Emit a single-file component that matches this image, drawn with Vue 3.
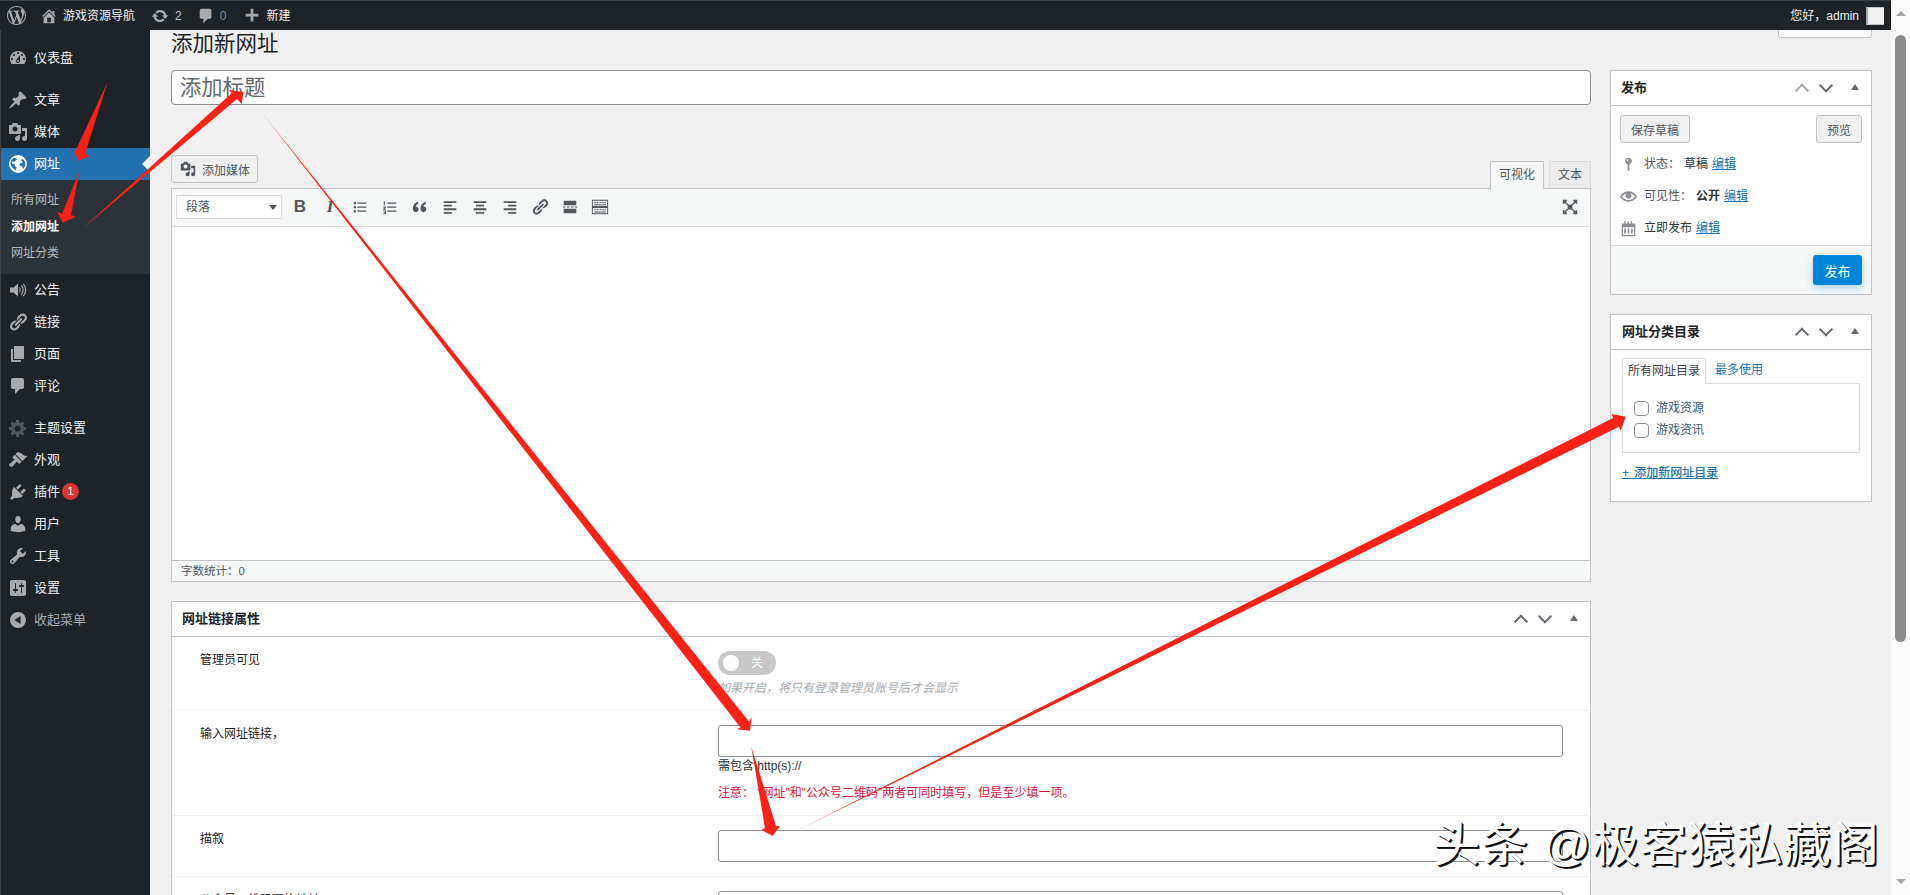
<template>
  <div class="page">
    <div class="frame">
      <header class="adminbar">
        <svg class="bar-logo" viewBox="0 0 20 20"><path :d="icons.wp" /></svg>
        <div class="bar-item site"><svg viewBox="0 0 20 20"><path :d="icons.home" /></svg><span>游戏资源导航</span></div>
        <div class="bar-item updates"><svg viewBox="0 0 20 20"><path :d="icons.update" /></svg><span>2</span></div>
        <div class="bar-item comments"><svg viewBox="0 0 20 20"><path :d="icons.comment" /></svg><span>0</span></div>
        <div class="bar-item newitem"><svg viewBox="0 0 20 20"><path :d="icons.plus" /></svg><span>新建</span></div>
        <div class="bar-right">您好，admin<span class="avatar"></span></div>
      </header>

      <div class="shell">
        <aside class="sidebar">
          <template v-for="item in menu" :key="item.label">
            <a class="menu-item" :class="{ current: item.current, sep: item.sep, dim: item.dim }">
              <svg class="menu-icon" :class="item.cls" viewBox="0 0 20 20"><path :d="icons[item.icon]" /></svg>
              <span>{{ item.label }}</span>
              <b v-if="item.badge" class="badge">{{ item.badge }}</b>
            </a>
            <div v-if="item.current" class="submenu">
              <a>所有网址</a>
              <a class="on">添加网址</a>
              <a>网址分类</a>
            </div>
          </template>
        </aside>

        <main class="main">
          <div class="head-row">
            <h1>添加新网址</h1>
            <div class="screen-tab"></div>
          </div>

          <div class="columns">
            <section class="left-col">
              <input class="title-input" placeholder="添加标题">

              <div class="editor-head">
                <button class="media-btn">
                  <svg viewBox="0 0 20 20"><path :d="icons.media" /></svg>添加媒体
                </button>
                <div class="editor-tabs">
                  <span class="tab active">可视化</span>
                  <span class="tab">文本</span>
                </div>
              </div>

              <div class="editor">
                <div class="toolbar">
                  <div class="format-select">段落<i></i></div>
                  <span class="tool tool-b">B</span>
                  <span class="tool tool-i">I</span>
                  <span v-for="tool in tools" :key="tool.name" class="tool">
                    <svg viewBox="0 0 20 20" v-html="tool.svg"></svg>
                  </span>
                  <span class="tool tool-full">
                    <svg viewBox="0 0 20 20"><path d="M1 1h5v2H4.500L8 7H12l3.500-4H14V1h5v5h-2V4.500L13 8v4l4 3.500V14h2v5h-5v-2h1.500L12 13H8l-3.500 4H6v2H1v-5h2v1.500L7 12V8L3 4.500V6H1z" /></svg>
                  </span>
                </div>
                <div class="editor-body"></div>
                <div class="editor-status">字数统计：0</div>
              </div>

              <div class="box link-box">
                <div class="box-head">
                  <h2>网址链接属性</h2>
                  <div class="handles"><i class="up"></i><i class="down"></i><i class="tri"></i></div>
                </div>

                <div class="row first">
                  <label>管理员可见</label>
                  <div class="field">
                    <div class="switch"><span class="knob"></span><span>关</span></div>
                    <p class="hint">如果开启，将只有登录管理员账号后才会显示</p>
                  </div>
                </div>
                <div class="row">
                  <label>输入网址链接，</label>
                  <div class="field">
                    <input class="text-input">
                    <p class="note">需包含 http(s)://</p>
                    <p class="warn">注意： "网址"和"公众号二维码"两者可同时填写，但是至少填一项。</p>
                  </div>
                </div>
                <div class="row">
                  <label>描叙</label>
                  <div class="field"><input class="text-input"></div>
                </div>
                <div class="row">
                  <label>公众号二维码图片地址</label>
                  <div class="field"><input class="text-input"></div>
                </div>
              </div>
            </section>

            <section class="right-col">
              <div class="box publish">
                <div class="box-head">
                  <h2>发布</h2>
                  <div class="handles"><i class="up faint"></i><i class="down"></i><i class="tri"></i></div>
                </div>
                <div class="actions">
                  <button class="plain-btn">保存草稿</button>
                  <button class="plain-btn">预览</button>
                </div>
                <div class="pub-row">
                  <svg viewBox="0 0 20 20"><path :d="icons.pin" /></svg>
                  <span class="key">状态：</span><span class="val">草稿</span><a>编辑</a>
                </div>
                <div class="pub-row">
                  <svg viewBox="0 0 20 20"><path :d="icons.eye" /></svg>
                  <span class="key">可见性：</span><strong>公开</strong><a>编辑</a>
                </div>
                <div class="pub-row">
                  <svg viewBox="0 0 20 20"><path :d="icons.calendar" /></svg>
                  <span class="val">立即发布</span><a>编辑</a>
                </div>
                <div class="pub-foot"><button class="primary">发布</button></div>
              </div>

              <div class="box category">
                <div class="box-head">
                  <h2>网址分类目录</h2>
                  <div class="handles"><i class="up"></i><i class="down"></i><i class="tri"></i></div>
                </div>
                <div class="cat-body">
                  <div class="cat-tabs">
                    <span class="cat-tab on">所有网址目录</span>
                    <span class="cat-tab">最多使用</span>
                  </div>
                  <div class="cat-panel">
                    <div v-for="cat in cats" :key="cat" class="cat-line"><span class="check"></span>{{ cat }}</div>
                  </div>
                  <a class="add-cat">+ 添加新网址目录</a>
                </div>
              </div>
            </section>
          </div>
        </main>
      </div>
    </div>

    <div class="scrollbar">
      <i class="arrow-up"></i>
      <span class="thumb"></span>
      <i class="arrow-down"></i>
    </div>

    <!-- red arrows drawn over the screenshot -->
    <svg class="overlay" viewBox="0 0 1910 895" width="1910" height="895">
      <defs>
        <linearGradient id="fadeA" gradientUnits="userSpaceOnUse" x1="257" y1="106" x2="300" y2="161">
          <stop offset="0" stop-color="#fa2117" stop-opacity="0.25" />
          <stop offset="1" stop-color="#fa2117" />
        </linearGradient>
        <linearGradient id="fadeB" gradientUnits="userSpaceOnUse" x1="788" y1="835" x2="860" y2="795">
          <stop offset="0" stop-color="#fa2117" stop-opacity="0.15" />
          <stop offset="1" stop-color="#fa2117" />
        </linearGradient>
      </defs>
      <polygon fill="#fa2117" points="107.700,81.700 85,154 90,155.700 78.300,160.700 72.300,148 75,151.700" />
      <polygon fill="#fa2117" points="79.300,171.700 71,215 76,216.700 62.700,222.700 57.300,211.700 62,214" />
      <polygon fill="#fa2117" points="81.700,229.300 232,93 228,90 243.500,92 241.700,104 237,99" />
      <polygon fill="url(#fadeA)" points="256.700,106 740.500,727.500 736.700,729.300 750,730.700 751.700,717.300 749,721.500" />
      <polygon fill="#fa2117" points="751.300,746.700 765,828 761.700,830 772.700,836 780,826 776,826" />
      <polygon fill="url(#fadeB)" points="788,835 1613,418 1611.700,414 1625.700,416.700 1620.700,430.700 1619,426.700" />
    </svg>

    <div class="watermark">头条 @极客猿私藏阁</div>
  </div>
</template>

<script setup>
const icons = {
  wp: 'M20 10c0-5.51-4.49-10-10-10C4.48 0 0 4.49 0 10c0 5.52 4.48 10 10 10 5.51 0 10-4.48 10-10zM7.780 15.370L4.370 6.220c.55-.02 1.170-.08 1.170-.08.5-.06.44-1.130-.06-1.110 0 0-1.450.11-2.370.11-.18 0-.37 0-.58-.01C4.120 2.690 6.870 1.110 10 1.110c2.330 0 4.450.87 6.050 2.340-.68-.11-1.650.39-1.650 1.580 0 .74.45 1.360.9 2.100.35.61.55 1.360.55 2.460 0 1.490-1.400 5-1.400 5l-3.030-8.370c.54-.02.82-.17.82-.17.5-.05.44-1.250-.06-1.220 0 0-1.440.12-2.380.12-.87 0-2.330-.12-2.330-.12-.5-.03-.56 1.200-.06 1.220l.92.08 1.260 3.410zM17.410 10c.24-.64.74-1.870.43-4.250.7 1.290 1.050 2.710 1.050 4.250 0 3.290-1.730 6.240-4.400 7.780.97-2.590 1.940-5.200 2.920-7.780zM6.100 18.090C3.120 16.650 1.110 13.530 1.110 10c0-1.300.23-2.480.72-3.590C3.250 10.300 4.670 14.200 6.100 18.090zm4.030-6.630l2.580 6.980c-.86.29-1.760.45-2.710.45-.79 0-1.570-.11-2.290-.33.81-2.380 1.620-4.740 2.420-7.100z',
  home: 'M16 8.500l1.530 1.530-1.060 1.060L10 4.620l-6.470 6.470-1.060-1.060L10 2.500l4 4v-2h2v4zm-6-2.460l6 5.990V18H4v-5.970zM12 17v-5H8v5h4z',
  update: 'M10.200 3.280c3.530 0 6.430 2.610 6.920 6h2.080l-3.500 4-3.500-4h2.320c-.45-1.970-2.210-3.450-4.320-3.450-1.450 0-2.730.71-3.540 1.780L4.950 5.660C6.230 4.200 8.110 3.280 10.200 3.280zm-.4 13.440c-3.520 0-6.430-2.610-6.920-6H.8l3.500-4c1.170 1.330 2.330 2.670 3.500 4H5.480c.45 1.970 2.210 3.450 4.320 3.450 1.450 0 2.730-.71 3.540-1.780l1.710 1.950c-1.280 1.460-3.150 2.380-5.250 2.380z',
  comment: 'M5 2h9c1.100 0 2 .9 2 2v7c0 1.100-.9 2-2 2h-2l-5 5v-5H5c-1.100 0-2-.9-2-2V4c0-1.100.9-2 2-2z',
  plus: 'M17 7.500v3h-5.500V16h-3v-5.500H3v-3h5.500V2h3v5.500z',
  dashboard: 'M3.760 16h12.480c1.100-1.370 1.760-3.110 1.760-5 0-4.420-3.580-8-8-8s-8 3.580-8 8c0 1.890.66 3.630 1.760 5zM10 4c.55 0 1 .45 1 1s-.45 1-1 1-1-.45-1-1 .45-1 1-1zM6 6c.55 0 1 .45 1 1s-.45 1-1 1-1-.45-1-1 .45-1 1-1zm8 0c.55 0 1 .45 1 1s-.45 1-1 1-1-.45-1-1 .45-1 1-1zm-5.370 5.550L12 7v6c0 1.100-.9 2-2 2s-2-.9-2-2c0-.57.24-1.080.63-1.450zM4 10c.55 0 1 .45 1 1s-.45 1-1 1-1-.45-1-1 .45-1 1-1zm12 0c.55 0 1 .45 1 1s-.45 1-1 1-1-.45-1-1 .45-1 1-1zm-5 3c0-.55-.45-1-1-1s-1 .45-1 1 .45 1 1 1 1-.45 1-1z',
  post: 'M10.440 3.020l1.820-1.820 6.360 6.350-1.830 1.820c-1.050-.68-2.480-.57-3.410.36l-.75.75c-.92.93-1.040 2.350-.35 3.410l-1.830 1.820-2.410-2.410-2.800 2.790c-.42.42-3.380 2.710-3.800 2.290s1.860-3.390 2.280-3.810l2.790-2.790L4.100 9.360l1.830-1.820c1.050.69 2.480.57 3.400-.36l.75-.75c.93-.92 1.050-2.350.36-3.410z',
  media: 'M13 11V4c0-.55-.45-1-1-1h-1.670L9 1H5L3.670 3H2c-.55 0-1 .45-1 1v7c0 .55.45 1 1 1h10c.55 0 1-.45 1-1zM7 4.500c1.380 0 2.500 1.120 2.500 2.500S8.380 9.500 7 9.500 4.500 8.380 4.500 7 5.620 4.500 7 4.500zM14 6h5v10.500c0 1.380-1.120 2.500-2.500 2.500S14 17.880 14 16.500s1.120-2.500 2.500-2.500c.17 0 .34.02.5.05V9h-3V6zm-4 8.050V13h2v3.500c0 1.380-1.120 2.500-2.500 2.500S7 17.880 7 16.500 8.120 14 9.500 14c.17 0 .34.02.5.05z',
  globe: 'M10 1a9 9 0 1 0 0 18 9 9 0 0 0 0-18zM5.200 4.300c1.300-.5 2.800-.2 3.400.6.500.7-.2 1.300-.9 1.500-.8.3-.6 1.100-1.300 1.400-.8.300-1.100-.5-1.900-.2-.7.300-.8 1-.4 1.600.500.7 1.600.4 2.300.9.800.6.400 1.500 1 2.200.5.6 1.200.9 1.100 1.800-.1.800-.7 1.300-.7 2.100C5.200 15 3 12.700 2.500 9.800c-.3-2.200 1-4.300 2.700-5.500zm8.300 1.200c.9-.3 1.900-.1 2.500.7 1.100 1.500 1.600 3.500 1.100 5.400-.3 1.200-1 2.400-2 3.300-.5-.7-.3-1.600-.9-2.300-.6-.7-1.700-.5-2.300-1.200-.5-.7-.1-1.700.6-2.100.7-.4 1.600-.1 2-.9.300-.7-.6-1.100-1.100-1.500-.3-.4-.3-1.200.1-1.400z',
  speaker: 'M2 7.500h3.500L10 3.500v13l-4.500-4H2zM11.500 7c1.600.9 1.600 5.100 0 6l-.5-1c.8-.7.8-3.300 0-4zM13.500 5c2.900 1.700 2.900 8.300 0 10l-.6-1c2.100-1.600 2.100-6.400 0-8zM15.500 3.500c3.600 2.500 3.600 10.500 0 13l-.6-1c2.800-2.300 2.800-8.700 0-11z',
  links: 'M17.740 2.760c1.680 1.690 1.680 4.410 0 6.100l-1.530 1.520c-1.120 1.120-2.700 1.470-4.140 1.090l2.620-2.610.76-.77.76-.76c.84-.84.84-2.200 0-3.040-.84-.85-2.200-.85-3.040 0l-.77.76-3.380 3.380c-.37-1.440-.02-3.020 1.100-4.140l1.520-1.530c1.690-1.680 4.420-1.680 6.100 0zM8.590 13.430l5.340-5.340c.42-.42.42-1.100 0-1.520-.44-.43-1.130-.39-1.530 0l-5.330 5.340c-.42.42-.42 1.100 0 1.520.44.43 1.130.39 1.520 0zm-.76 2.290l4.140-4.150c.38 1.440.03 3.020-1.090 4.140l-1.520 1.530c-1.690 1.680-4.410 1.680-6.100 0-1.680-1.680-1.680-4.420 0-6.100l1.530-1.520c1.120-1.120 2.700-1.470 4.140-1.100l-4.140 4.150c-.85.84-.85 2.200 0 3.050.84.84 2.200.84 3.040 0z',
  page: 'M6 15V2h10v13H6zm-1 1h8v2H3V5h2v11z',
  gear: 'M18 12h-2.180c-.17.7-.44 1.350-.81 1.930l1.540 1.540-2.100 2.100-1.540-1.540c-.58.36-1.230.63-1.910.79V19H8v-2.180c-.68-.16-1.330-.43-1.910-.79l-1.540 1.540-2.120-2.120 1.540-1.540c-.36-.58-.63-1.230-.79-1.910H1V9.030h2.170c.16-.7.44-1.350.8-1.940L2.430 5.550l2.100-2.100 1.540 1.540c.58-.37 1.240-.64 1.930-.81V2h3v2.180c.68.16 1.330.43 1.910.79l1.540-1.540 2.120 2.120-1.540 1.540c.36.59.64 1.240.8 1.940H18V12zm-8.500 1.500c1.660 0 3-1.340 3-3s-1.340-3-3-3-3 1.340-3 3 1.340 3 3 3z',
  appearance: 'M14.480 11.060L7.410 3.990l1.500-1.500c.5-.56 2.300-.47 3.510.32 1.210.8 1.430 1.280 2.910 2.100 1.180.64 2.450 1.260 4.450.85zm-.71.71L6.700 4.700 4.930 6.470c-.39.39-.39 1.020 0 1.410l1.060 1.060c.39.39.39 1.030 0 1.420-.6.6-1.430 1.110-2.210 1.690-.35.26-.7.53-1.010.84C1.430 13.230.4 14.750 1.800 16.150c1.410 1.410 2.920.38 3.760-.77.31-.31.58-.66.84-1.010.58-.78 1.090-1.610 1.690-2.210.39-.39 1.020-.39 1.410 0l1.060 1.060c.39.39 1.020.39 1.410 0z',
  plugin: 'M13.110 4.360L9.870 7.600 8 5.730l3.240-3.240c.35-.34 1.050-.2 1.560.32.52.51.66 1.210.31 1.550zm-8 1.770l.91-1.120 9.010 9.010-1.190.84c-.71.71-2.630 1.160-3.820 1.160H6.140L4.900 17.260c-.59.59-1.540.59-2.120 0-.59-.58-.59-1.530 0-2.120l1.240-1.240v-3.880c0-1.130.4-3.190 1.090-3.890zm7.260 3.970l3.240-3.240c.34-.35 1.040-.21 1.550.31.52.51.66 1.210.31 1.550l-3.240 3.250z',
  users: 'M10 9.250c-2.270 0-2.730-3.440-2.730-3.440C7 4.020 7.820 2 9.970 2c2.160 0 2.980 2.020 2.710 3.810 0 0-.41 3.440-2.680 3.440zm0 2.570L12.720 10c2.390 0 4.520 2.330 4.520 4.530v2.490s-3.650 1.130-7.240 1.130c-3.650 0-7.240-1.130-7.240-1.130v-2.490c0-2.250 1.940-4.480 4.470-4.480z',
  tools: 'M16.680 9.770c-1.340 1.340-3.300 1.670-4.950.99l-5.410 6.520c-.99.99-2.590.99-3.580 0s-.99-2.590 0-3.570l6.520-5.420c-.68-1.650-.35-3.610.99-4.950 1.280-1.280 3.120-1.620 4.720-1.060l-2.890 2.890 2.820 2.820 2.860-2.870c.53 1.580.18 3.390-1.080 4.650zM3.810 16.210c.4.39 1.040.39 1.430 0 .4-.4.4-1.040 0-1.430-.39-.4-1.030-.4-1.430 0-.39.39-.39 1.030 0 1.430z',
  settings: 'M18 16V4c0-1.100-.9-2-2-2H4c-1.100 0-2 .9-2 2v12c0 1.100.9 2 2 2h12c1.100 0 2-.9 2-2zM8 11h1c.55 0 1 .45 1 1s-.45 1-1 1H8v1.500c0 .28-.22.5-.5.5s-.5-.22-.5-.5V13H6c-.55 0-1-.45-1-1s.45-1 1-1h1V5.500c0-.28.22-.5.5-.5s.5.22.5.5V11zm5-2h-1c-.55 0-1-.45-1-1s.45-1 1-1h1V5.500c0-.28.22-.5.5-.5s.5.22.5.5V7h1c.55 0 1 .45 1 1s-.45 1-1 1h-1v5.500c0 .28-.22.5-.5.5s-.5-.22-.5-.5V9z',
  collapse: 'M10 2a8 8 0 1 0 0 16 8 8 0 0 0 0-16zm2.500 4v8l-6-4z',
  pin: 'M14 6c0 1.860-1.280 3.410-3 3.860V16c0 1-2 2-2 2V9.860c-1.720-.45-3-2-3-3.860 0-2.210 1.790-4 4-4s4 1.790 4 4zM8 5c0 .55.45 1 1 1s1-.45 1-1-.45-1-1-1-1 .45-1 1z',
  eye: 'M19.700 9.400C17.700 6 14 3.900 10 3.900S2.300 6 .3 9.400L0 10l.3.6c2 3.400 5.700 5.500 9.700 5.500s7.700-2.100 9.700-5.500l.3-.6-.3-.6zM10 14.100c-3.100 0-6-1.600-7.700-4.100C3.600 8 5.700 6.600 8 6.100c-.9.6-1.500 1.700-1.500 2.900 0 1.900 1.600 3.500 3.500 3.500s3.500-1.600 3.500-3.500c0-1.200-.6-2.300-1.500-2.900 2.300.5 4.400 1.900 5.700 3.900-1.700 2.500-4.600 4.100-7.700 4.100z',
  calendar: 'M2 4h3V1.500h1.500V4h2.300V1.500h1.500V4h2.300V1.500h1.500V4H18v15H2zm1.500 4.500V17.500h13V8.500zM5 10h2v6H5zm4 0h2v6H9zm4 0h2v6h-2z',
}

const menu = [
  { label: '仪表盘', icon: 'dashboard' },
  { label: '文章', icon: 'post', sep: true },
  { label: '媒体', icon: 'media' },
  { label: '网址', icon: 'globe', current: true },
  { label: '公告', icon: 'speaker' },
  { label: '链接', icon: 'links' },
  { label: '页面', icon: 'page' },
  { label: '评论', icon: 'comment' },
  { label: '主题设置', icon: 'gear', sep: true, cls: 'dark' },
  { label: '外观', icon: 'appearance' },
  { label: '插件', icon: 'plugin', badge: '1' },
  { label: '用户', icon: 'users' },
  { label: '工具', icon: 'tools' },
  { label: '设置', icon: 'settings' },
  { label: '收起菜单', icon: 'collapse', dim: true },
]

const tools = [
  { name: 'ul', svg: '<path d="M3 4.500h2.500V7H3zM3 9h2.500v2.500H3zM3 13.500h2.500V16H3zM7 5h10v1.400H7zM7 9.500h10v1.400H7zM7 14h10v1.400H7z"/>' },
  { name: 'ol', svg: '<path d="M7 5h10v1.400H7zM7 9.500h10v1.400H7zM7 14h10v1.400H7zM3 3.500h1.300V8H3zM2.500 9.500h3v1L3.800 12h1.700v1H2.500v-1l1.700-1.500H2.500zM2.500 14h3v4h-3v-1h2v-.5h-1v-1h1V15h-2z"/>' },
  { name: 'quote', svg: '<path d="M2 11.500c0-3.300 2.200-6 6-7.500v2.500C6.500 7.200 5.400 8.300 5.300 9.500c1.900 0 3.200 1.300 3.200 3.100S7 15.800 5.200 15.800C3.200 15.800 2 14 2 11.500zM10.500 11.500c0-3.300 2.200-6 6-7.500v2.500c-1.500.7-2.600 1.800-2.700 3 1.900 0 3.200 1.300 3.200 3.100s-1.500 3.200-3.300 3.200c-2 0-3.200-1.800-3.200-4.300z"/>' },
  { name: 'left', svg: '<path d="M3 3.500h14v2H3zM3 7.500h9v2H3zM3 11.500h14v2H3zM3 15.500h9v2H3z"/>' },
  { name: 'center', svg: '<path d="M3 3.500h14v2H3zM5.500 7.500h9v2h-9zM3 11.500h14v2H3zM5.500 15.500h9v2h-9z"/>' },
  { name: 'right', svg: '<path d="M3 3.500h14v2H3zM8 7.500h9v2H8zM3 11.500h14v2H3zM8 15.500h9v2H8z"/>' },
  { name: 'link', svg: '<path d="' + icons.links + '"/>' },
  { name: 'more', svg: '<path d="M3 3h14v5H3zM3 12h14v5H3zM2 9.500h3v1H2zM6.500 9.500h3v1h-3zM11 9.500h3v1h-3zM15.500 9.500H18v1h-2.500z"/>' },
  { name: 'kitchen', svg: '<path fill-rule="evenodd" d="M1 2h18v16H1zM2 3v6h16V3zM2 11v6h16v-6zM3.500 4.500h2v1h-2zM6.500 4.500h2v1h-2zM9.500 4.500h2v1h-2zM12.500 4.500h2v1h-2zM15 4.500h1.500v1H15zM3.500 7h13v1h-13zM3.500 12.500h2v1h-2zM6.500 12.500h2v1h-2zM9.500 12.500h2v1h-2zM12.500 12.500h2v1h-2zM15 12.500h1.500v1H15zM3.500 15h13v1h-13z"/>' },
]

const cats = ['游戏资源', '游戏资讯']
</script>

<style scoped>
.page {
  position: relative; display: flex; width: 1910px; height: 895px; overflow: hidden;
  background: #f0f0f0; color: #3c434a; font-size: 12px; line-height: 18px;
  font-family: "Liberation Sans", "Noto Sans CJK SC", sans-serif;
}
.frame { width: 1891px; display: flex; flex-direction: column; }

.adminbar {
  height: 30px; flex-shrink: 0; box-sizing: border-box; border-top: 1px solid #3d4246;
  background: #1d2327; color: #f0f0f1; display: flex; align-items: center; padding-left: 7px;
}
.adminbar svg { fill: #a7aaad; }
.bar-logo { width: 19px; height: 19px; margin-top: -1px; }
.bar-item { display: flex; align-items: center; }
.bar-item svg { width: 18px; height: 18px; }
.site { margin-left: 14px; gap: 5px; }
.updates { margin-left: 16px; gap: 6px; color: #c3c4c7; }
.comments { margin-left: 15px; gap: 5px; color: #8c8f94; }
.newitem { margin-left: 17px; gap: 5px; }
.bar-right { margin-left: auto; margin-right: 7px; display: flex; align-items: center; gap: 7px; }
.avatar { width: 16px; height: 16px; background: #f0f0f0; border-left: 2px solid #a7aaad; border-top: 1px solid #c3c4c7; border-bottom: 1px solid #c3c4c7; }

.shell { flex: 1; min-height: 0; display: flex; }

.sidebar {
  width: 150px; flex-shrink: 0; box-sizing: border-box; background: #1d2327;
  padding-top: 12px; border-left: 1px solid #3d4246;
}
.menu-item {
  position: relative; display: flex; align-items: center; height: 32px; box-sizing: border-box;
  padding-left: 7px; color: #f0f0f1; font-size: 13px;
}
.menu-item.sep { margin-top: 10px; }
.menu-icon { width: 20px; height: 20px; fill: #a7aaad; margin-right: 6px; flex-shrink: 0; }
.menu-icon.dark { fill: #50575e; }
.menu-item.dim { color: #a7aaad; }
.menu-item.current { background: #2271b1; color: #fff; }
.menu-item.current .menu-icon { fill: #fff; }
.menu-item.current::after {
  content: ""; position: absolute; right: 0; top: 8px;
  border: 8px solid transparent; border-right-color: #f0f0f0; border-left-width: 0;
}
.badge {
  width: 17px; height: 17px; border-radius: 50%; background: #d63638; color: #fff;
  font-size: 11px; font-weight: 400; line-height: 17px; text-align: center; margin-left: 2px;
}
.submenu { background: #2c3338; padding: 7px 0; font-size: 12px; }
.submenu a { display: block; height: 26.500px; line-height: 26.500px; padding-left: 10px; color: #b4b9be; }
.submenu a.on { color: #fff; font-weight: 700; }

.main { flex: 1; min-width: 0; padding-left: 21px; overflow: hidden; }
.head-row { height: 40px; display: flex; justify-content: space-between; align-items: flex-start; padding-right: 19px; }
.head-row h1 { margin: 0; font-size: 21.500px; font-weight: 400; line-height: 28px; color: #1d2327; }
.screen-tab {
  width: 94px; height: 8px; box-sizing: border-box; background: #fff;
  border: 1px solid #c3c4c7; border-top: 0; border-radius: 0 0 4px 4px;
}

.columns { display: flex; gap: 19px; align-items: flex-start; }
.left-col { width: 1420px; flex-shrink: 0; }
.right-col { width: 262px; flex-shrink: 0; display: flex; flex-direction: column; gap: 19px; }

.title-input {
  display: block; width: 100%; height: 35px; box-sizing: border-box; padding: 2px 8px 0;
  background: #fff; border: 1px solid #8c8f94; border-radius: 4px; outline: none;
  font: 21.300px "Liberation Sans", "Noto Sans CJK SC", sans-serif;
}
.title-input::placeholder { color: #646970; opacity: 1; }

.editor-head { margin-top: 50px; height: 33px; display: flex; justify-content: space-between; }
.media-btn {
  height: 28px; width: 87px; display: flex; align-items: center; padding: 0 0 0 8px; gap: 6px;
  background: #f0f0f0; border: 1px solid #c3c4c7; border-radius: 3px; color: #50575e;
  font: 12px "Liberation Sans", "Noto Sans CJK SC", sans-serif;
}
.media-btn svg { width: 16px; height: 16px; fill: #50575e; }
.editor-tabs { display: flex; align-items: flex-end; gap: 5px; }
.tab {
  height: 27px; line-height: 26px; box-sizing: border-box; padding: 0 8px; color: #50575e;
  background: #ebebeb; border: 1px solid #dcdcde; border-bottom: 0;
}
.tab.active { background: #f6f7f7; border-color: #c3c4c7; height: 28px; margin-bottom: -1px; position: relative; }

.editor { border: 1px solid #c3c4c7; background: #fff; }
.toolbar {
  height: 38px; box-sizing: border-box; background: #f6f7f7; border-bottom: 1px solid #dcdcde;
  display: flex; align-items: center; padding: 0 0 2px 4px;
}
.format-select {
  position: relative; width: 106px; height: 24px; line-height: 22px; box-sizing: border-box;
  margin-right: 3px; padding-left: 9px; background: #fff; border: 1px solid #dcdcde; color: #50575e;
}
.format-select i {
  position: absolute; right: 4px; top: 9px;
  border: 4px solid transparent; border-top: 5px solid #50575e; border-bottom: 0;
}
.tool { width: 30px; height: 24px; display: flex; align-items: center; justify-content: center; color: #50575e; }
.tool svg { width: 18px; height: 18px; fill: #50575e; }
.tool-b { font-size: 17px; font-weight: 700; }
.tool-i { font-size: 17px; font-weight: 700; font-style: italic; font-family: "Liberation Serif", serif; }
.tool-full { margin-left: auto; margin-right: 5px; }
.tool-full svg { width: 16px; height: 16px; }
.editor-body { height: 333px; }
.editor-status {
  height: 21px; line-height: 20px; box-sizing: border-box; padding-left: 9px; font-size: 11.500px;
  background: #f6f7f7; border-top: 1px solid #c3c4c7; color: #50575e;
}

.box { background: #fff; border: 1px solid #c3c4c7; }
.link-box { margin-top: 19px; }
.box-head {
  height: 35px; box-sizing: border-box; border-bottom: 1px solid #c3c4c7;
  display: flex; align-items: center; justify-content: space-between; padding: 0 10px;
}
.box-head h2 { margin: 0; font-size: 13px; font-weight: 700; color: #1d2327; }
.handles { display: flex; align-items: center; height: 14px; }
.handles i { display: block; }
.handles .up, .handles .down {
  width: 10px; height: 10px; box-sizing: border-box; border: solid #646970;
  border-width: 2px 0 0 2px; transform: translateY(2.500px) rotate(45deg);
}
.handles .down { transform: translateY(-2.500px) rotate(225deg); margin-left: 14px; }
.handles .faint { border-color: #a7aaad; }
.handles .tri {
  margin: -2px 2px 0 20px;
  border: 4px solid transparent; border-bottom: 6px solid #646970; border-top: 0;
}

.row { display: flex; padding: 14px 0 14px 28px; border-bottom: 1px solid #f0f0f1; }
.row.first { padding-bottom: 13px; }
.row label { width: 518px; flex-shrink: 0; line-height: 18px; color: #1d2327; }
.field { width: 845px; }
.text-input {
  display: block; width: 100%; height: 32px; box-sizing: border-box; background: #fff;
  border: 1px solid #8c8f94; border-radius: 3px; outline: none;
}
.switch {
  width: 58px; height: 24px; box-sizing: border-box; padding-left: 5px; border-radius: 12px; background: #c8c8c8;
  color: #fff; display: flex; align-items: center; gap: 12px;
}
.knob { width: 16px; height: 16px; border-radius: 50%; background: #fff; }
.hint { margin: 4px 0 0; font-style: italic; color: #a7aaad; }
.note { margin: 0; color: #2c3338; }
.warn { margin: 9px 0 -1px; color: #e0103c; }

.publish { height: 225px; box-sizing: border-box; display: flex; flex-direction: column; }
.actions { display: flex; justify-content: space-between; padding: 9px 9px 5px; }
.plain-btn {
  height: 28px; padding: 0 10px; background: #f0f0f0; border: 1px solid #c3c4c7; border-radius: 3px;
  color: #50575e; font: 12px "Liberation Sans", "Noto Sans CJK SC", sans-serif;
}
.pub-row { height: 32px; flex-shrink: 0; display: flex; align-items: center; padding-left: 9px; }
.pub-row svg { width: 17px; height: 17px; fill: #8c8f94; margin-right: 7px; }
.pub-row .key { margin-right: 4px; color: #50575e; }
.pub-row .val { color: #2c3338; }
.pub-row strong { color: #2c3338; }
.pub-row a { margin-left: 4px; color: #2271b1; text-decoration: underline; }
.pub-foot {
  margin-top: auto; height: 49px; box-sizing: border-box; background: #f6f7f7;
  border-top: 1px solid #dcdcde; padding: 9px 9px 0; display: flex; justify-content: flex-end;
}
.primary {
  width: 49px; height: 30px; padding: 0; border: 0; border-radius: 3px; background: #0085d9; color: #fff;
  box-shadow: 0 3px 8px rgba(0, 133, 217, 0.3); font: 13px "Liberation Sans", "Noto Sans CJK SC", sans-serif;
}

.category { height: 188px; box-sizing: border-box; }
.category .box-head { padding-left: 11px; }
.cat-body { padding: 8px 11px 0; }
.cat-tabs { display: flex; height: 25px; }
.cat-tab { padding: 0 8px; line-height: 24px; color: #2271b1; }
.cat-tab.on {
  padding: 0 5px; color: #3c434a; position: relative; z-index: 1; background: #fff; height: 26px; box-sizing: border-box;
  border: 1px solid #dcdcde; border-bottom: 0; margin-right: 1px;
}
.cat-panel { height: 70px; box-sizing: border-box; border: 1px solid #dcdcde; padding-top: 13px; }
.cat-line { display: flex; align-items: center; height: 22px; padding-left: 11px; gap: 7px; color: #3c5a78; }
.check { width: 15px; height: 15px; box-sizing: border-box; border: 1px solid #8c8f94; border-radius: 4px; background: #fff; }
.add-cat { display: block; margin-top: 11px; color: #2271b1; text-decoration: underline; font-weight: 500; word-spacing: 2px; }

.scrollbar { width: 19px; flex-shrink: 0; background: #fafafa; display: flex; flex-direction: column; align-items: center; }
.arrow-up {
  margin-top: 11px; border: 5px solid transparent; border-bottom: 5px solid #a3a3a3; border-top: 0;
}
.thumb { margin-top: 19px; width: 11px; height: 607px; border-radius: 6px; background: #8c8c8c; }
.arrow-down {
  margin-top: auto; margin-bottom: 11px; border: 5px solid transparent; border-top: 5px solid #a3a3a3; border-bottom: 0;
}

.overlay { position: absolute; left: 0; top: 0; pointer-events: none; }
.watermark {
  position: absolute; left: 1433px; top: 812px; white-space: nowrap; font-size: 47px; line-height: 66px;
  font-weight: 400; letter-spacing: 1px; color: #fff; text-shadow: 1px 1px 0 #000, 2px 2px 0 #222, -1px 0 0 #fff;
}
</style>

<style>
html, body { margin: 0; overflow: hidden; }
</style>
